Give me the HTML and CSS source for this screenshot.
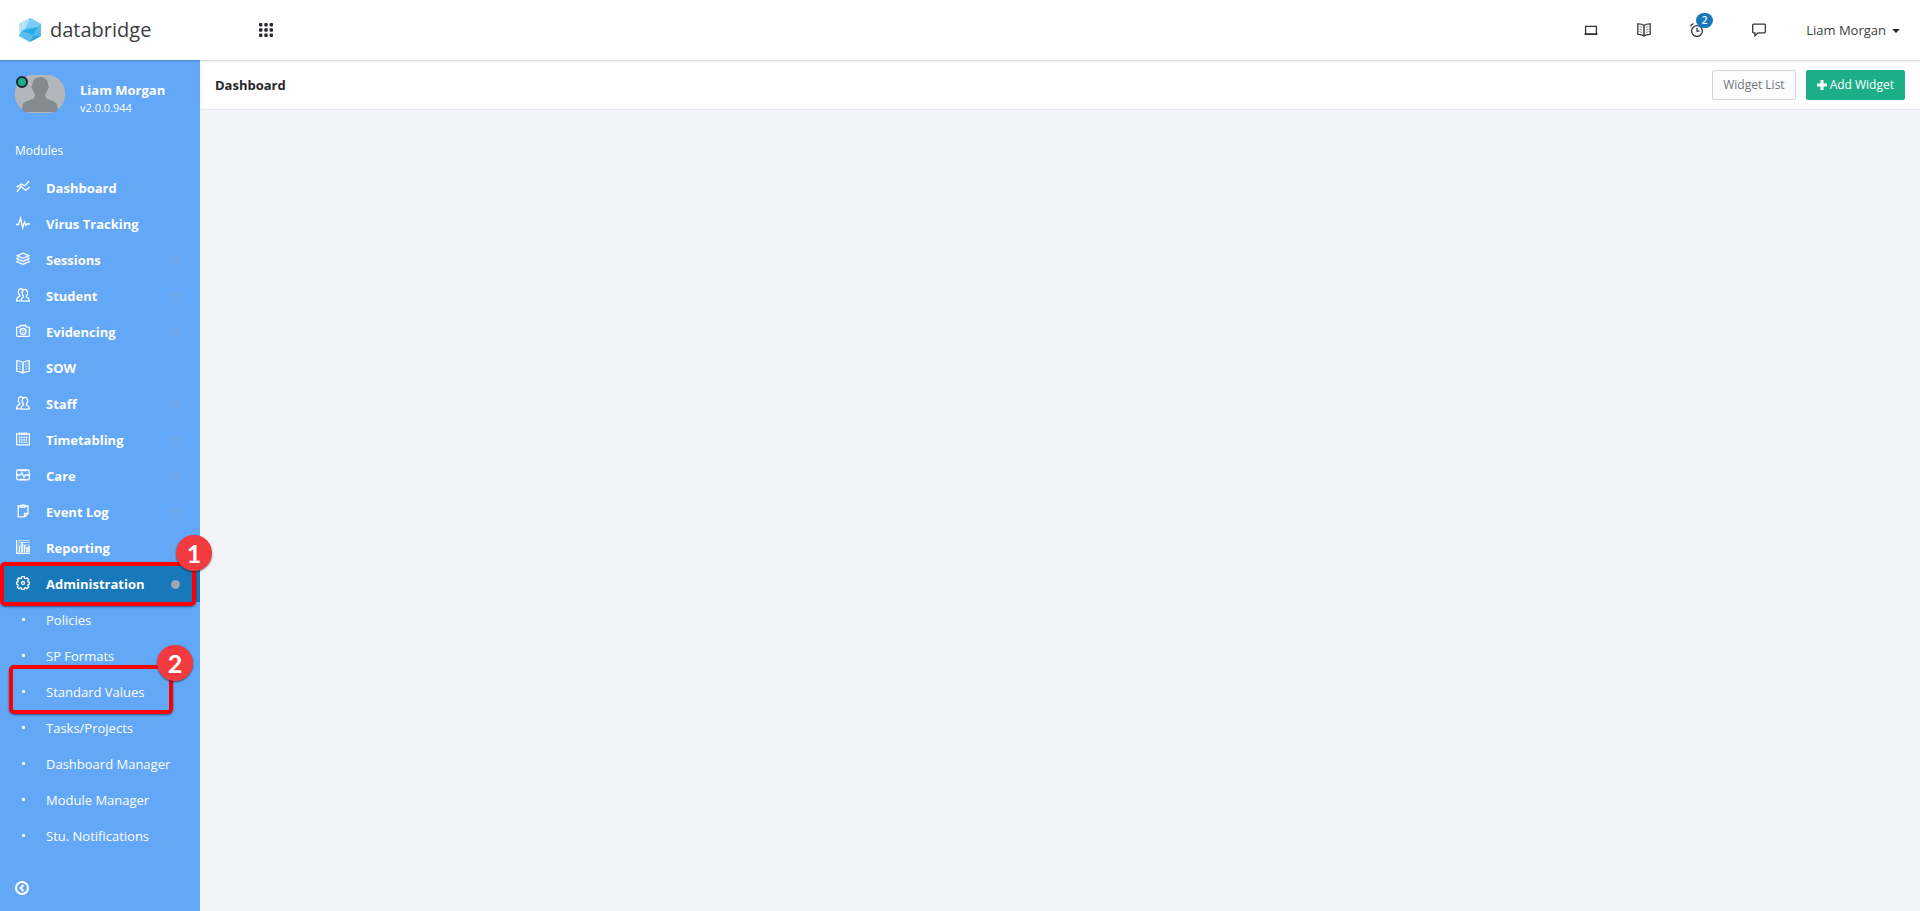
FILE: index.html
```html
<!DOCTYPE html>
<html lang="en">
<head>
<meta charset="utf-8">
<title>databridge</title>
<link rel="stylesheet" href="styles.css">
</head>
<body>
<svg class="defs" width="0" height="0" aria-hidden="true">
  <symbol id="people" viewBox="0 0 14 14"><path d="M5 13.200h8.400c0-3-1-3.600-3-4.200V8c2-2 1.500-6.700-1.500-6.700S5.400 6 7.400 8v1C6 9.500 5 10.200 5 13.200zM6.700 1.600C5.500.2 2.300.4 2.300 4c0 1.500.6 2.500 1.500 3.300v.9C1.700 9 .6 9.800.6 12.800H4"/></symbol>
  <symbol id="book" viewBox="0 0 14 14"><path d="M7 2.500C5 1 3 .8 .8 .9v10.500c2.500-.1 4.400.2 6.200 1.700 1.800-1.500 3.700-1.800 6.200-1.700V.9C11 .8 9 1 7 2.500zv10.500"/><path class="fine" d="M7 2.500V13M2.500 3.500l2.500 1M2.500 6l2.500 1M2.500 8.500l2.500 1M11.500 3.500l-2.500 1M11.500 6L9 7M11.500 8.500l-2.500 1"/></symbol>
</svg>

<header class="topbar">
  <a class="brand" href="#">
    <svg class="logo" viewBox="0 0 24 26" aria-hidden="true">
      <path fill="#6cc8f1" d="M12 1l11 6v12l-11 6-11-6V7z"/>
      <path fill="#b4e2f7" d="M12 1L1 7l2.500 8L8 11z"/>
      <path fill="#7accf2" d="M12 1l11 6-3 3-12 1z"/>
      <path fill="#c4e9f9" d="M1 7l2.500 8L1 19z"/>
      <path fill="#62c0f0" d="M8 11L20 10 3.500 14z"/>
      <path fill="#27a9e7" d="M20 10L3.500 14 15 18.500z"/>
      <path fill="#55b9ee" d="M23 7l-3 3-5 8.500 8 .5z"/>
      <path fill="#5bbcec" d="M3.500 14L15 18.500 12 25 1 19z"/>
      <path fill="#2ea4e4" d="M15 18.500l8 .5-11 6z"/>
    </svg>
    <span>databridge</span>
  </a>
  <button class="icon-btn apps" aria-label="Applications">
    <svg width="14" height="14" viewBox="0 0 14 14" fill="#25282d"><rect x="0" y="0" width="3.400" height="3.400" rx="1"/><rect x="5.300" y="0" width="3.400" height="3.400" rx="1"/><rect x="10.600" y="0" width="3.400" height="3.400" rx="1"/><rect x="0" y="5.300" width="3.400" height="3.400" rx="1"/><rect x="5.300" y="5.300" width="3.400" height="3.400" rx="1"/><rect x="10.600" y="5.300" width="3.400" height="3.400" rx="1"/><rect x="0" y="10.600" width="3.400" height="3.400" rx="1"/><rect x="5.300" y="10.600" width="3.400" height="3.400" rx="1"/><rect x="10.600" y="10.600" width="3.400" height="3.400" rx="1"/></svg>
  </button>
  <div class="tools">
    <button class="icon-btn" aria-label="Screen"><svg class="ico" viewBox="0 0 14 14"><path d="M1.600 10.300V3.400h10.800v6.900M.4 10.900h13.200"/><path d="M1 11.400h12"/></svg></button>
    <button class="icon-btn" aria-label="Library"><svg class="ico"><use href="#book"/></svg></button>
    <button class="icon-btn alarm" aria-label="Reminders"><svg class="ico" viewBox="0 0 14 14"><circle cx="7" cy="8" r="5.400"/><path d="M7 4.800V8.200h2.600M.8 3.400Q1 1.200 3.500.9M10.500.9q2.500.3 2.700 2.500"/></svg><span class="badge">2</span></button>
    <button class="icon-btn" aria-label="Messages"><svg class="ico" viewBox="0 0 14 14"><path d="M1.500 1.200h11q.8 0 .8.800v7q0 .8-.8.800H6L3 12.800V9.800H1.500q-.8 0-.8-.8V2q0-.8.800-.8z"/></svg></button>
    <button class="user-menu">Liam Morgan <i class="caret"></i></button>
  </div>
</header>

<div class="shell">
  <aside class="sidebar">
    <div class="profile">
      <div class="avatar">
        <svg viewBox="0 0 50 38" aria-hidden="true"><rect width="50" height="38" rx="18" fill="#b3b7bc"/><path fill="#858a90" d="M25.500 2c5 0 7.500 3 7.500 8 2 1 .5 4-.7 5-.4 2-1 3-2 4 0 4 1 4.500 5 6 5 2 7 2 7.500 10 0 1-2 2-4 2H12c-3 0-5-1-5-2 .5-8 2-8 8-10 4-1.500 5-2 5-6-1-1-1.600-2-2-4-1.500-1-2.500-4-.5-5 0-5 3-8 8-8z"/></svg>
        <i class="online"></i>
      </div>
      <div class="who"><div class="name">Liam Morgan</div><div class="version">v2.0.0.944</div></div>
    </div>
    <div class="nav-title">Modules</div>
    <nav>
      <ul class="nav">
        <li><a href="#"><svg class="ico" viewBox="0 0 14 14"><path d="M.3 6.500h1.700L5.300 4l3.500 1.800L13.300 1M.8 12L5 6.500l4.800 4 3.700-3.500"/></svg>Dashboard</a></li>
        <li><a href="#"><svg class="ico" viewBox="0 0 14 14"><path d="M0 8.500h2.500L4.500 2l2.200 10L8.500 6l1.500 3.500.8-1.500H14"/></svg>Virus Tracking</a></li>
        <li><a href="#"><svg class="ico" viewBox="0 0 14 14"><path d="M7 1.200l6 2.600-6 2.600-6-2.600zM2.500 5.800L.8 6.700 7 9.400l6.200-2.700-1.700-.9M2.500 8.700L.8 9.600l6.200 2.700 6.200-2.700-1.700-.9"/></svg>Sessions<i class="ring"></i></a></li>
        <li><a href="#"><svg class="ico"><use href="#people"/></svg>Student<i class="ring"></i></a></li>
        <li><a href="#"><svg class="ico" viewBox="0 0 14 14"><path d="M1.400 3.200h2L4.600 1.500h4.800l1.200 1.700h2q.8 0 .8.800v7.500q0 .8-.8.800H1.400q-.8 0-.8-.8V4q0-.8.800-.8z"/><circle cx="7" cy="7.500" r="3"/><circle class="fine" cx="7" cy="7.500" r="1.200"/></svg>Evidencing<i class="ring"></i></a></li>
        <li><a href="#"><svg class="ico"><use href="#book"/></svg>SOW</a></li>
        <li><a href="#"><svg class="ico"><use href="#people"/></svg>Staff<i class="ring"></i></a></li>
        <li><a href="#"><svg class="ico" viewBox="0 0 14 14"><path d="M.6 1.800h12.800v11H.6z"/><path d="M3.500.3v3M5.800.3v3M8.200.3v3M10.500.3v3"/><path class="fine" d="M3.500 4v6.800M5.800 4v6.800M8.200 4v6.800M10.500 4v6.800M2.500 5.500h9M2.500 8h9M2.500 10.400h9"/></svg>Timetabling<i class="ring"></i></a></li>
        <li><a href="#"><svg class="ico" viewBox="0 0 14 14"><rect x=".7" y="2" width="12.600" height="9.800" rx="1.500"/><path d="M1 7h3.500L6 4.800l2 4.400L9.300 7H13M4 2.500h6M4 11.500h6"/></svg>Care<i class="ring"></i></a></li>
        <li><a href="#"><svg class="ico" viewBox="0 0 14 14"><path d="M4.500 2H2.200v10.800h6.500l3.300-3.300V2H9.500M8.500 12.500V9.300h3.300M4.500 1.500h5v1.700h-5zM6.500.5h1"/></svg>Event Log<i class="ring"></i></a></li>
        <li><a href="#"><svg class="ico" viewBox="0 0 14 14"><path d="M.6 0v13.300H14"/><path class="bars" d="M3.500 12.500V6M6 12.500V2M8.500 12.500V5M11 12.500V7M13 12.500V6"/><path class="fine" d="M2 2.500h12M2 5h12M2 .5h12"/></svg>Reporting<i class="ring"></i></a></li>
        <li class="marked">
          <a class="active" href="#"><svg class="ico" viewBox="0 0 14 14"><path d="M5.800.7h2.400l.4 1.600 1 .4 1.400-.9 1.700 1.700-.9 1.400.4 1 1.300.3v1.900l-1.300.4-.4 1 .9 1.400-1.700 1.700-1.400-.9-1 .4-.4 1.300H5.800l-.4-1.300-1-.4-1.400.9-1.700-1.700.9-1.400-.4-1L.6 8.100V6.200l1.200-.3.400-1-.9-1.400L3 1.800l1.400.9 1-.4z"/><circle cx="7" cy="7" r="1.500"/></svg>Administration<i class="ring solid"></i></a>
          <span class="frame frame-wide"><b class="step">1</b></span>
          <ul class="subnav">
            <li><a href="#"><i class="dot"></i>Policies</a></li>
            <li><a href="#"><i class="dot"></i>SP Formats</a></li>
            <li class="marked"><a href="#"><i class="dot"></i>Standard Values</a><span class="frame frame-inset"><b class="step">2</b></span></li>
            <li><a href="#"><i class="dot"></i>Tasks/Projects</a></li>
            <li><a href="#"><i class="dot"></i>Dashboard Manager</a></li>
            <li><a href="#"><i class="dot"></i>Module Manager</a></li>
            <li><a href="#"><i class="dot"></i>Stu. Notifications</a></li>
          </ul>
        </li>
      </ul>
    </nav>
    <button class="icon-btn collapse" aria-label="Collapse menu"><svg width="14" height="14" viewBox="0 0 14 14" fill="none" stroke="#fff" stroke-width="2"><circle cx="7" cy="7" r="6"/><path d="M8.500 4L5.500 7l3 3"/></svg></button>
  </aside>
  <main class="content">
    <div class="titlebar">
      <h1>Dashboard</h1>
      <button class="btn">Widget List</button>
      <button class="btn primary"><svg width="10" height="10" viewBox="0 0 10 10" aria-hidden="true"><path d="M5 0v10M0 5h10" stroke="#fff" stroke-width="3"/></svg>Add Widget</button>
    </div>
  </main>
</div>
</body>
</html>
```

FILE: styles.css
```css
* { box-sizing: border-box; }
body {
  margin: 0;
  min-height: 100vh;
  display: flex;
  flex-direction: column;
  background: #f2f4f8;
  color: #25282d;
  font: 13px/18px "Open Sans", sans-serif;
}
a { color: inherit; text-decoration: none; }
button { font: inherit; color: inherit; cursor: pointer; }
ul { list-style: none; margin: 0; padding: 0; }
.defs { position: absolute; }

.ico {
  width: 14px;
  height: 14px;
  flex: none;
  fill: none;
  stroke: currentColor;
  stroke-width: 1.3;
}
.fine { stroke-width: 0.6; }
.bars { stroke-width: 1.6; }
.icon-btn {
  display: flex;
  position: relative;
  padding: 0;
  border: 0;
  background: none;
}

.topbar {
  display: flex;
  align-items: center;
  height: 60px;
  background: #fff;
  box-shadow: 0 1px 2px rgba(0, 0, 0, 0.2);
  position: relative;
}
.brand {
  display: flex;
  align-items: center;
  gap: 8px;
  width: 259px;
  padding-left: 18px;
  font-size: 20px;
  line-height: 28px;
  color: #3b3e43;
}
.logo { width: 24px; height: 26px; }
.tools {
  display: flex;
  align-items: center;
  gap: 39px;
  margin-left: auto;
  padding-right: 20px;
}
.tools .icon-btn { color: #33363b; }
.tools .alarm { margin-right: 9px; }
.tools .user-menu { margin-left: 1px; color: #3b3e43; }
.badge {
  position: absolute;
  left: 6px;
  top: -10px;
  width: 17px;
  height: 15px;
  border-radius: 8px;
  background: #1779ba;
  color: #fff;
  font: 600 10px/15px "Open Sans", sans-serif;
  text-align: center;
}
.user-menu {
  display: flex;
  align-items: center;
  gap: 6px;
  padding: 0;
  border: 0;
  background: none;
}
.caret {
  border: 4px solid transparent;
  border-top-color: #25282d;
  border-bottom: 0;
  margin-top: 2px;
}

.shell { display: flex; flex: 1; }
.sidebar {
  display: flex;
  flex-direction: column;
  width: 200px;
  flex: none;
  background: #63a7f7;
  color: #fff;
}
.profile {
  display: flex;
  align-items: flex-start;
  gap: 15px;
  padding: 15px 15px 0;
}
.avatar { position: relative; width: 50px; height: 38px; }
.online {
  position: absolute;
  left: 1px;
  top: 1px;
  width: 12px;
  height: 12px;
  border: 2px solid #1b2430;
  border-radius: 50%;
  background: #1bae88;
}
.who { padding-top: 6px; }
.name { font-weight: 700; }
.version { font-size: 11px; line-height: 18px; }
.nav-title { padding: 25px 15px 10px; font-size: 12px; }
.nav a {
  display: flex;
  align-items: center;
  gap: 16px;
  height: 36px;
  padding: 0 20px 0 16px;
  font-weight: 700;
}
.nav .ico, .dot { margin-bottom: 2px; }
.nav .subnav a { font-weight: 400; }
.nav .active { background: #1779ba; }
.ring {
  width: 9px;
  height: 9px;
  flex: none;
  margin-left: auto;
  border: 1px solid #84a2c6;
  border-radius: 50%;
}
.ring.solid { border-color: #a3a8ad; background: #a3a8ad; }
.dot { width: 14px; display: flex; justify-content: center; }
.dot::before {
  content: "";
  width: 3px;
  height: 3px;
  border-radius: 1px;
  background: #fff;
}
.marked { position: relative; }
.frame {
  position: absolute;
  border: 4px solid #f90006;
  border-radius: 5px;
  box-shadow: 0 1px 2px rgba(0, 0, 0, 0.5);
  pointer-events: none;
  z-index: 1;
}
.frame-wide { left: 0; top: -4px; width: 196px; height: 44px; }
.frame-inset { left: 9px; top: -9px; width: 164px; height: 49px; }
.step {
  position: absolute;
  right: -20px;
  top: -31px;
  width: 36px;
  height: 36px;
  border-radius: 50%;
  background: #f33b3f;
  box-shadow: 0 1px 2px rgba(0, 0, 0, 0.5);
  font: 700 25px/36px Lato, sans-serif;
  text-align: center;
}
.frame-inset .step { right: -24px; top: -24px; }
.collapse { margin: 27px 15px 16px; align-self: flex-start; }

.content { flex: 1; }
.titlebar {
  display: flex;
  align-items: center;
  gap: 10px;
  height: 50px;
  padding: 0 15px;
  background: #fff;
  border-bottom: 1px solid #e2e5e9;
}
h1 { margin: 0 auto 0 0; font-size: 13px; line-height: 18px; }
.btn {
  display: flex;
  align-items: center;
  gap: 3px;
  height: 30px;
  padding: 0 10px;
  border: 1px solid #d0d6db;
  border-radius: 2px;
  background: #fcfcfc;
  color: #70757c;
  font-size: 12px;
}
.btn.primary { border-color: #1bae88; background: #1bae88; color: #fff; }
```
